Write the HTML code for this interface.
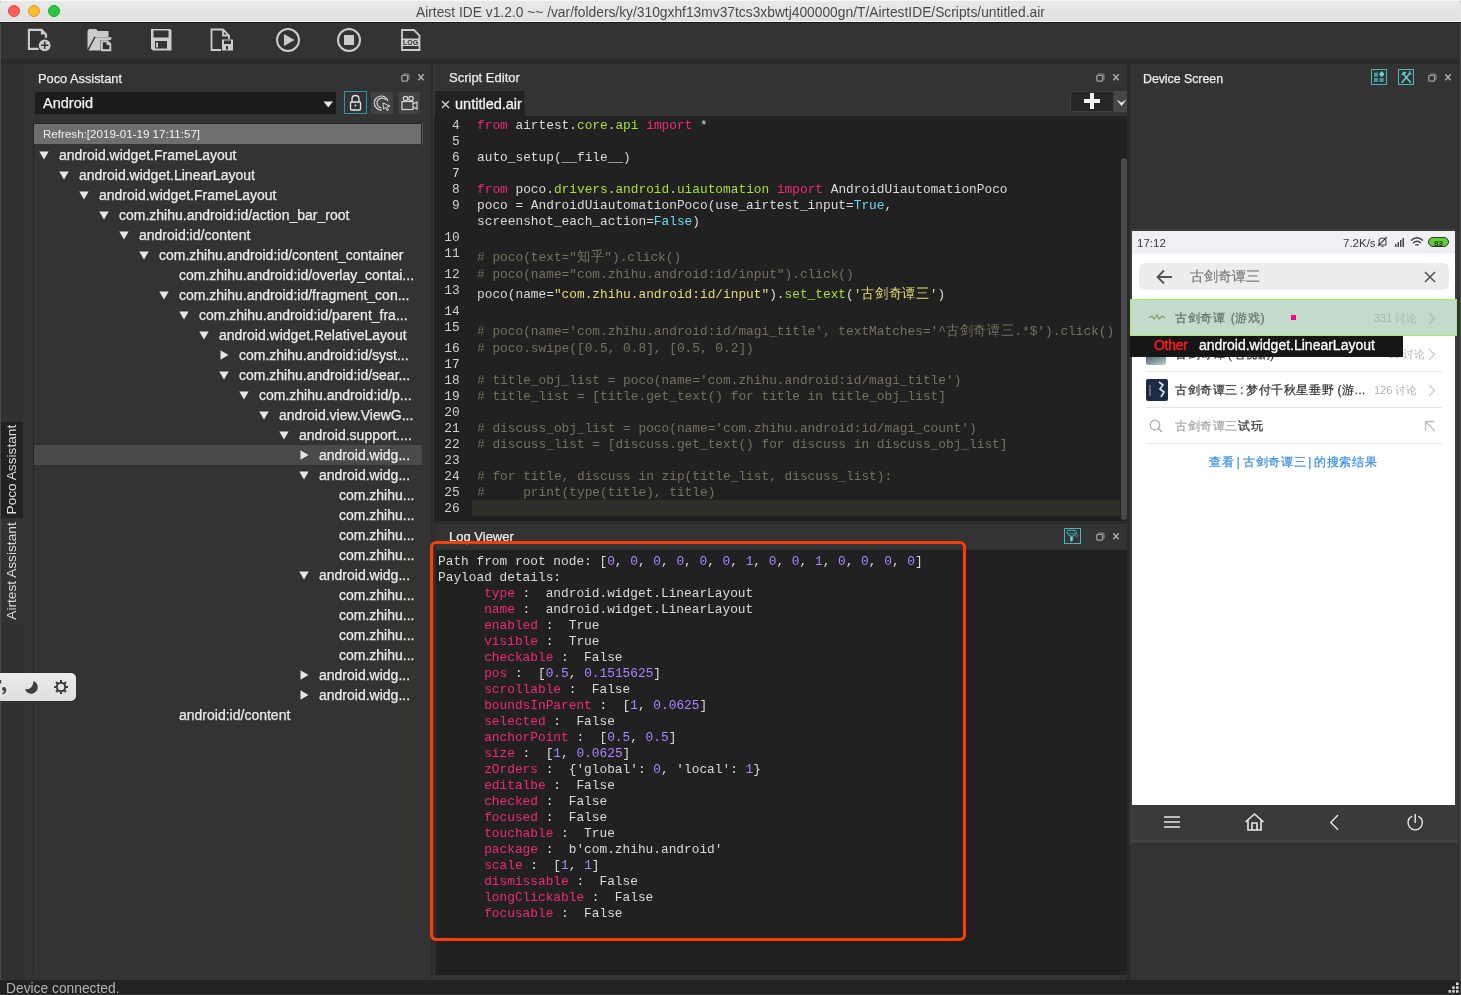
<!DOCTYPE html><html><head><meta charset="utf-8"><style>
html,body{margin:0;padding:0;}
body{width:1461px;height:995px;overflow:hidden;position:relative;background:#333333;font-family:"Liberation Sans", sans-serif;}
.mono{font-family:"Liberation Mono", monospace;}
.cjk{font-size:14px;letter-spacing:0.5px;}
</style></head><body><div style="position:absolute;left:0;top:0;width:1461px;height:995px;will-change:transform"><div style="position:absolute;left:0px;top:0px;width:6px;height:6px;background:#c8c8c8;"></div><div style="position:absolute;left:1455px;top:0px;width:6px;height:6px;background:#c8c8c8;"></div><div style="position:absolute;left:0px;top:0px;width:1461px;height:22px;background:linear-gradient(#e9e9e9,#e0e0e0);border-top-left-radius:5px;border-top-right-radius:5px;"></div><div style="position:absolute;left:0px;top:0px;width:1461px;height:1px;background:#f7f7f7;border-top-left-radius:5px;border-top-right-radius:5px;"></div><div style="position:absolute;left:0px;top:21px;width:1461px;height:1px;background:#f2f2f2;"></div><div style="position:absolute;left:0px;top:22px;width:1461px;height:1px;background:#1b1b1b;"></div><div style="position:absolute;left:8px;top:5px;width:12px;height:12px;background:#fc5f57;border-radius:50%;box-sizing:border-box;border:0.5px solid #de4a42;"></div><div style="position:absolute;left:28px;top:5px;width:12px;height:12px;background:#fdbc2e;border-radius:50%;box-sizing:border-box;border:0.5px solid #de9f1f;"></div><div style="position:absolute;left:48px;top:5px;width:12px;height:12px;background:#28c840;border-radius:50%;box-sizing:border-box;border:0.5px solid #1ea931;"></div><div style="position:absolute;left:416px;top:4.6px;white-space:pre;font-size:13.8px;line-height:16px;color:#4b4b4b;">Airtest IDE v1.2.0 ~~ /var/folders/ky/310gxhf13mv37tcs3xbwtj400000gn/T/AirtestIDE/Scripts/untitled.air</div><div style="position:absolute;left:0px;top:23px;width:1461px;height:36px;background:#333333;"></div><div style="position:absolute;left:0px;top:59px;width:1461px;height:5px;background:#2a2a2a;"></div><svg style="position:absolute;left:0;top:0" width="440" height="64">
<!-- new file -->
<path d="M38.6 48.9 H28.9 V29.9 H41.5" fill="none" stroke="#c9cbcd" stroke-width="2.1"/>
<path d="M40.9 28.8 H42 L47.1 34 V37.8 H44.8 V34.6 H40.9 Z" fill="#c9cbcd"/>
<circle cx="44.7" cy="45.3" r="5.9" fill="#c9cbcd"/>
<path d="M44.7 41.6 V49 M41 45.3 H48.4" stroke="#333" stroke-width="1.5"/>
<!-- open folder -->
<path d="M87.5 31 L89 29 H96 L98 31 H108.5 V37 H95 L87.5 50 Z" fill="#c9cbcd"/>
<path d="M95.5 37.3 H111.8 L107 50.5 H88.5 Z" fill="#c9cbcd"/>
<path d="M95 36.8 L87.8 50" stroke="#333" stroke-width="1.1"/>
<rect x="100.5" y="40" width="11" height="11.5" fill="#333"/>
<path d="M101.8 41.3 H107.5 L110.3 44 V50.3 H101.8 Z" fill="none" stroke="#c9cbcd" stroke-width="1.9"/>
<path d="M106.5 41.3 V45 H110.3 Z" fill="#c9cbcd"/>
<!-- save -->
<path d="M151 29 H170 L171.5 30.5 V50.5 H153 L151 48.5 Z" fill="#c9cbcd"/>
<rect x="153.5" y="30.5" width="15" height="7" fill="#333"/>
<rect x="155" y="41" width="12" height="7.5" fill="#333"/>
<rect x="156" y="42.5" width="2" height="5" fill="#c9cbcd"/>
<!-- save as -->
<g fill="none" stroke="#c9cbcd" stroke-width="1.8">
 <path d="M221 50 H211.5 V29.5 H223 L229 35.5 V39"/>
 <path d="M223 29.5 V35.5 H229"/>
</g>
<rect x="222" y="39.5" width="11" height="11" fill="#c9cbcd"/>
<rect x="224" y="40.5" width="7" height="3.5" fill="#333"/>
<rect x="226" y="46" width="2" height="3.5" fill="#333"/>
<!-- play -->
<circle cx="288" cy="40" r="11" fill="none" stroke="#c9cbcd" stroke-width="2"/>
<path d="M284 34 L294.5 40 L284 46 Z" fill="#c9cbcd"/>
<!-- stop -->
<circle cx="349" cy="40" r="11" fill="none" stroke="#c9cbcd" stroke-width="2"/>
<rect x="344" y="35" width="10" height="10" fill="#c9cbcd"/>
<!-- log -->
<path d="M402 30 H414 L419.5 35.5 V50 H402 Z" fill="none" stroke="#c9cbcd" stroke-width="1.8"/>
<rect x="401" y="38.5" width="19" height="7.5" fill="#c9cbcd"/>
<text x="410.5" y="45" font-family="Liberation Sans" font-weight="bold" font-size="7" fill="#333" text-anchor="middle">LOG</text>
</svg><div style="position:absolute;left:0px;top:64px;width:23px;height:916px;background:#313131;"></div><div style="position:absolute;left:0px;top:23px;width:1px;height:957px;background:#4a4a4a;"></div><div style="position:absolute;left:1460px;top:23px;width:1px;height:957px;background:#4a4a4a;"></div><div style="position:absolute;left:23px;top:64px;width:10px;height:916px;background:#333333;"></div><div style="position:absolute;left:1px;top:422px;width:21.5px;height:96px;background:#222222;"></div><div style="position:absolute;left:1px;top:518px;width:21.5px;height:105px;background:#333333;"></div><div style="position:absolute;left:-33px;top:461px;width:89px;height:18px;transform:rotate(-90deg);font-size:13.7px;line-height:18px;color:#dcdcdc;white-space:pre;text-align:center">Poco Assistant</div><div style="position:absolute;left:-38px;top:562px;width:99px;height:18px;transform:rotate(-90deg);font-size:13.7px;line-height:18px;color:#dcdcdc;white-space:pre;text-align:center">Airtest Assistant</div><div style="position:absolute;left:431px;top:64px;width:4px;height:916px;background:#2b2b2b;"></div><div style="position:absolute;left:433px;top:64px;width:1.5px;height:916px;background:#373737;"></div><div style="position:absolute;left:1127px;top:64px;width:3px;height:916px;background:#2a2a2a;"></div><div style="position:absolute;left:434px;top:521px;width:693px;height:2.5px;background:#2b2b2b;"></div><div style="position:absolute;left:0px;top:980px;width:1461px;height:15px;background:#222222;"></div><div style="position:absolute;left:6px;top:980.5px;white-space:pre;font-size:13.8px;line-height:16px;color:#b4b4b4;">Device connected.</div><div style="position:absolute;left:38px;top:71px;white-space:pre;font-size:12.8px;line-height:16px;color:#ececec;-webkit-text-stroke:0.25px #ececec;">Poco Assistant</div><svg style="position:absolute;left:401px;top:73px" width="26" height="10">
<rect x="0.8" y="2.3" width="5.8" height="5.8" rx="1.2" fill="none" stroke="#a0a0a0" stroke-width="1.3"/>
<path d="M2.2 1 H6.5 Q8 1 8 2.5 V6.8" fill="none" stroke="#8a8a8a" stroke-width="1.1"/>
<path d="M17.3 1.3 L22.7 7.3 M22.7 1.3 L17.3 7.3" stroke="#b0b0b0" stroke-width="1.4"/>
</svg><div style="position:absolute;left:35px;top:92px;width:301px;height:22px;background:#1c1c1c;"></div><div style="position:absolute;left:43px;top:94px;white-space:pre;font-size:14.5px;line-height:18px;color:#f0f0f0;-webkit-text-stroke:0.25px #f0f0f0;">Android</div><svg style="position:absolute;left:323px;top:101px" width="11" height="7"><path d="M0.5 0.5 H10 L5.25 6.5 Z" fill="#e8e8e8"/></svg><div style="position:absolute;left:344px;top:91px;width:23px;height:23px;box-sizing:border-box;border:1px solid #2b9aa6;"></div><svg style="position:absolute;left:344px;top:91px" width="23" height="23"><g fill="none" stroke="#e6e6e6" stroke-width="1.3"><path d="M8 11 V8 Q8 4.5 11.5 4.5 Q15 4.5 15 8 V11"/><rect x="6.5" y="11" width="10" height="8" rx="1"/></g><circle cx="11.5" cy="14.5" r="1" fill="#e6e6e6"/></svg><div style="position:absolute;left:371px;top:92px;width:22px;height:22px;background:#424242;"></div><svg style="position:absolute;left:371px;top:92px" width="22" height="22"><g fill="none" stroke="#d6d6d6" stroke-width="1.2"><path d="M17 9 A7 7 0 1 0 11 18"/><path d="M15 8 A5 5 0 1 0 10.5 16"/></g><path d="M12 11 L19 14 L16 15 L17.5 18 L16 18.5 L14.5 15.5 L12.5 17 Z" fill="none" stroke="#d6d6d6" stroke-width="1"/></svg><div style="position:absolute;left:398px;top:92px;width:22px;height:22px;background:#424242;"></div><svg style="position:absolute;left:398px;top:92px" width="22" height="22"><g fill="none" stroke="#d6d6d6" stroke-width="1.2"><circle cx="7.5" cy="6.5" r="2.2"/><circle cx="13" cy="6.5" r="2.2"/><rect x="4" y="9.5" width="11" height="8"/><path d="M15 12 L19 10 V17 L15 15"/></g></svg><div style="position:absolute;left:33px;top:123px;width:390px;height:852px;box-sizing:border-box;border-left:1px solid #262626;border-top:1px solid #262626;background:#333333;"></div><div style="position:absolute;left:34px;top:124px;width:388px;height:20px;background:#6e6e6e;"></div><div style="position:absolute;left:421px;top:124px;width:1px;height:20px;background:#2a2a2a;"></div><div style="position:absolute;left:422px;top:123px;width:1px;height:22px;background:#555555;"></div><div style="position:absolute;left:43px;top:126px;white-space:pre;font-size:11.6px;line-height:16px;color:#f2f2f2;">Refresh:[2019-01-19 17:11:57]</div><svg style="position:absolute;left:39px;top:151px" width="10" height="9"><path d="M0.3 0.5 H9.7 L5 8.5 Z" fill="#e6e6e6"/></svg><div style="position:absolute;left:59px;top:146px;white-space:pre;font-size:14px;line-height:18px;color:#ececec;-webkit-text-stroke:0.25px #ececec;">android.widget.FrameLayout</div><svg style="position:absolute;left:59px;top:171px" width="10" height="9"><path d="M0.3 0.5 H9.7 L5 8.5 Z" fill="#e6e6e6"/></svg><div style="position:absolute;left:79px;top:166px;white-space:pre;font-size:14px;line-height:18px;color:#ececec;-webkit-text-stroke:0.25px #ececec;">android.widget.LinearLayout</div><svg style="position:absolute;left:79px;top:191px" width="10" height="9"><path d="M0.3 0.5 H9.7 L5 8.5 Z" fill="#e6e6e6"/></svg><div style="position:absolute;left:99px;top:186px;white-space:pre;font-size:14px;line-height:18px;color:#ececec;-webkit-text-stroke:0.25px #ececec;">android.widget.FrameLayout</div><svg style="position:absolute;left:99px;top:211px" width="10" height="9"><path d="M0.3 0.5 H9.7 L5 8.5 Z" fill="#e6e6e6"/></svg><div style="position:absolute;left:119px;top:206px;white-space:pre;font-size:14px;line-height:18px;color:#ececec;-webkit-text-stroke:0.25px #ececec;">com.zhihu.android:id/action_bar_root</div><svg style="position:absolute;left:119px;top:231px" width="10" height="9"><path d="M0.3 0.5 H9.7 L5 8.5 Z" fill="#e6e6e6"/></svg><div style="position:absolute;left:139px;top:226px;white-space:pre;font-size:14px;line-height:18px;color:#ececec;-webkit-text-stroke:0.25px #ececec;">android:id/content</div><svg style="position:absolute;left:139px;top:251px" width="10" height="9"><path d="M0.3 0.5 H9.7 L5 8.5 Z" fill="#e6e6e6"/></svg><div style="position:absolute;left:159px;top:246px;white-space:pre;font-size:14px;line-height:18px;color:#ececec;-webkit-text-stroke:0.25px #ececec;">com.zhihu.android:id/content_container</div><div style="position:absolute;left:179px;top:266px;white-space:pre;font-size:14px;line-height:18px;color:#ececec;-webkit-text-stroke:0.25px #ececec;">com.zhihu.android:id/overlay_contai...</div><svg style="position:absolute;left:159px;top:291px" width="10" height="9"><path d="M0.3 0.5 H9.7 L5 8.5 Z" fill="#e6e6e6"/></svg><div style="position:absolute;left:179px;top:286px;white-space:pre;font-size:14px;line-height:18px;color:#ececec;-webkit-text-stroke:0.25px #ececec;">com.zhihu.android:id/fragment_con...</div><svg style="position:absolute;left:179px;top:311px" width="10" height="9"><path d="M0.3 0.5 H9.7 L5 8.5 Z" fill="#e6e6e6"/></svg><div style="position:absolute;left:199px;top:306px;white-space:pre;font-size:14px;line-height:18px;color:#ececec;-webkit-text-stroke:0.25px #ececec;">com.zhihu.android:id/parent_fra...</div><svg style="position:absolute;left:199px;top:331px" width="10" height="9"><path d="M0.3 0.5 H9.7 L5 8.5 Z" fill="#e6e6e6"/></svg><div style="position:absolute;left:219px;top:326px;white-space:pre;font-size:14px;line-height:18px;color:#ececec;-webkit-text-stroke:0.25px #ececec;">android.widget.RelativeLayout</div><svg style="position:absolute;left:220px;top:350px" width="9" height="10"><path d="M0.5 0.3 V9.7 L8.5 5 Z" fill="#e6e6e6"/></svg><div style="position:absolute;left:239px;top:346px;white-space:pre;font-size:14px;line-height:18px;color:#ececec;-webkit-text-stroke:0.25px #ececec;">com.zhihu.android:id/syst...</div><svg style="position:absolute;left:219px;top:371px" width="10" height="9"><path d="M0.3 0.5 H9.7 L5 8.5 Z" fill="#e6e6e6"/></svg><div style="position:absolute;left:239px;top:366px;white-space:pre;font-size:14px;line-height:18px;color:#ececec;-webkit-text-stroke:0.25px #ececec;">com.zhihu.android:id/sear...</div><svg style="position:absolute;left:239px;top:391px" width="10" height="9"><path d="M0.3 0.5 H9.7 L5 8.5 Z" fill="#e6e6e6"/></svg><div style="position:absolute;left:259px;top:386px;white-space:pre;font-size:14px;line-height:18px;color:#ececec;-webkit-text-stroke:0.25px #ececec;">com.zhihu.android:id/p...</div><svg style="position:absolute;left:259px;top:411px" width="10" height="9"><path d="M0.3 0.5 H9.7 L5 8.5 Z" fill="#e6e6e6"/></svg><div style="position:absolute;left:279px;top:406px;white-space:pre;font-size:14px;line-height:18px;color:#ececec;-webkit-text-stroke:0.25px #ececec;">android.view.ViewG...</div><svg style="position:absolute;left:279px;top:431px" width="10" height="9"><path d="M0.3 0.5 H9.7 L5 8.5 Z" fill="#e6e6e6"/></svg><div style="position:absolute;left:299px;top:426px;white-space:pre;font-size:14px;line-height:18px;color:#ececec;-webkit-text-stroke:0.25px #ececec;">android.support....</div><div style="position:absolute;left:34px;top:445px;width:388px;height:20px;background:#4a4a4a;"></div><svg style="position:absolute;left:300px;top:450px" width="9" height="10"><path d="M0.5 0.3 V9.7 L8.5 5 Z" fill="#e6e6e6"/></svg><div style="position:absolute;left:319px;top:446px;white-space:pre;font-size:14px;line-height:18px;color:#ececec;-webkit-text-stroke:0.25px #ececec;">android.widg...</div><svg style="position:absolute;left:299px;top:471px" width="10" height="9"><path d="M0.3 0.5 H9.7 L5 8.5 Z" fill="#e6e6e6"/></svg><div style="position:absolute;left:319px;top:466px;white-space:pre;font-size:14px;line-height:18px;color:#ececec;-webkit-text-stroke:0.25px #ececec;">android.widg...</div><div style="position:absolute;left:339px;top:486px;white-space:pre;font-size:14px;line-height:18px;color:#ececec;-webkit-text-stroke:0.25px #ececec;">com.zhihu...</div><div style="position:absolute;left:339px;top:506px;white-space:pre;font-size:14px;line-height:18px;color:#ececec;-webkit-text-stroke:0.25px #ececec;">com.zhihu...</div><div style="position:absolute;left:339px;top:526px;white-space:pre;font-size:14px;line-height:18px;color:#ececec;-webkit-text-stroke:0.25px #ececec;">com.zhihu...</div><div style="position:absolute;left:339px;top:546px;white-space:pre;font-size:14px;line-height:18px;color:#ececec;-webkit-text-stroke:0.25px #ececec;">com.zhihu...</div><svg style="position:absolute;left:299px;top:571px" width="10" height="9"><path d="M0.3 0.5 H9.7 L5 8.5 Z" fill="#e6e6e6"/></svg><div style="position:absolute;left:319px;top:566px;white-space:pre;font-size:14px;line-height:18px;color:#ececec;-webkit-text-stroke:0.25px #ececec;">android.widg...</div><div style="position:absolute;left:339px;top:586px;white-space:pre;font-size:14px;line-height:18px;color:#ececec;-webkit-text-stroke:0.25px #ececec;">com.zhihu...</div><div style="position:absolute;left:339px;top:606px;white-space:pre;font-size:14px;line-height:18px;color:#ececec;-webkit-text-stroke:0.25px #ececec;">com.zhihu...</div><div style="position:absolute;left:339px;top:626px;white-space:pre;font-size:14px;line-height:18px;color:#ececec;-webkit-text-stroke:0.25px #ececec;">com.zhihu...</div><div style="position:absolute;left:339px;top:646px;white-space:pre;font-size:14px;line-height:18px;color:#ececec;-webkit-text-stroke:0.25px #ececec;">com.zhihu...</div><svg style="position:absolute;left:300px;top:670px" width="9" height="10"><path d="M0.5 0.3 V9.7 L8.5 5 Z" fill="#e6e6e6"/></svg><div style="position:absolute;left:319px;top:666px;white-space:pre;font-size:14px;line-height:18px;color:#ececec;-webkit-text-stroke:0.25px #ececec;">android.widg...</div><svg style="position:absolute;left:300px;top:690px" width="9" height="10"><path d="M0.5 0.3 V9.7 L8.5 5 Z" fill="#e6e6e6"/></svg><div style="position:absolute;left:319px;top:686px;white-space:pre;font-size:14px;line-height:18px;color:#ececec;-webkit-text-stroke:0.25px #ececec;">android.widg...</div><div style="position:absolute;left:179px;top:706px;white-space:pre;font-size:14px;line-height:18px;color:#ececec;-webkit-text-stroke:0.25px #ececec;">android:id/content</div><div style="position:absolute;left:449px;top:70px;white-space:pre;font-size:13px;line-height:16px;color:#ececec;-webkit-text-stroke:0.25px #ececec;">Script Editor</div><svg style="position:absolute;left:1096px;top:73px" width="26" height="10">
<rect x="0.8" y="2.3" width="5.8" height="5.8" rx="1.2" fill="none" stroke="#a0a0a0" stroke-width="1.3"/>
<path d="M2.2 1 H6.5 Q8 1 8 2.5 V6.8" fill="none" stroke="#8a8a8a" stroke-width="1.1"/>
<path d="M17.3 1.3 L22.7 7.3 M22.7 1.3 L17.3 7.3" stroke="#b0b0b0" stroke-width="1.4"/>
</svg><div style="position:absolute;left:435px;top:91px;width:90px;height:25px;background:#222222;"></div><div style="position:absolute;left:524px;top:91px;width:1px;height:25px;background:#2a2a2a;"></div><svg style="position:absolute;left:441px;top:100px" width="9" height="9"><path d="M1 1 L8 8 M8 1 L1 8" stroke="#d8d8d8" stroke-width="1.3"/></svg><div style="position:absolute;left:455px;top:95px;white-space:pre;font-size:14.5px;line-height:18px;color:#f2f2f2;-webkit-text-stroke:0.3px #f2f2f2;">untitled.air</div><div style="position:absolute;left:1070px;top:91px;width:44px;height:21px;box-sizing:border-box;border:1px solid #3e3e3e;background:#262626;"></div><svg style="position:absolute;left:1083px;top:93px" width="18" height="16"><path d="M9 0 V16 M1 8 H17" stroke="#eef2f4" stroke-width="4"/></svg><div style="position:absolute;left:1114px;top:91px;width:13px;height:21px;background:#474747;"></div><svg style="position:absolute;left:1116px;top:99px" width="11" height="8"><path d="M0.5 0.5 L5.5 7 L10.5 0.5 L5.5 3.5 Z" fill="#e8e8e8"/></svg><div style="position:absolute;left:434px;top:116px;width:693px;height:405px;background:#212121;"></div><div style="position:absolute;left:1121px;top:158px;width:6px;height:362px;background:#4a4a4a;border-radius:3px;"></div><div style="position:absolute;left:472px;top:500px;width:648px;height:16px;background:#2f2f2a;"></div><div style="position:absolute;left:437px;top:118px;width:24px;text-align:right;font-family:'Liberation Mono',monospace;font-size:13.6px;line-height:16px;transform-origin:0 0;transform:scaleX(0.9424);color:#d0d0d0;white-space:pre">4</div><div style="position:absolute;left:477px;top:118px;font-family:'Liberation Mono',monospace;font-size:13.6px;line-height:16px;transform-origin:0 0;transform:scaleX(0.9424);white-space:pre"><span style="color:#f0287a">from</span><span style="color:#dadada"> airtest.</span><span style="color:#a6e22e">core</span><span style="color:#dadada">.</span><span style="color:#a6e22e">api</span><span style="color:#dadada"> </span><span style="color:#f0287a">import</span><span style="color:#dadada"> *</span></div><div style="position:absolute;left:437px;top:134px;width:24px;text-align:right;font-family:'Liberation Mono',monospace;font-size:13.6px;line-height:16px;transform-origin:0 0;transform:scaleX(0.9424);color:#d0d0d0;white-space:pre">5</div><div style="position:absolute;left:477px;top:134px;font-family:'Liberation Mono',monospace;font-size:13.6px;line-height:16px;transform-origin:0 0;transform:scaleX(0.9424);white-space:pre"></div><div style="position:absolute;left:437px;top:150px;width:24px;text-align:right;font-family:'Liberation Mono',monospace;font-size:13.6px;line-height:16px;transform-origin:0 0;transform:scaleX(0.9424);color:#d0d0d0;white-space:pre">6</div><div style="position:absolute;left:477px;top:150px;font-family:'Liberation Mono',monospace;font-size:13.6px;line-height:16px;transform-origin:0 0;transform:scaleX(0.9424);white-space:pre"><span style="color:#dadada">auto_setup(__file__)</span></div><div style="position:absolute;left:437px;top:166px;width:24px;text-align:right;font-family:'Liberation Mono',monospace;font-size:13.6px;line-height:16px;transform-origin:0 0;transform:scaleX(0.9424);color:#d0d0d0;white-space:pre">7</div><div style="position:absolute;left:477px;top:166px;font-family:'Liberation Mono',monospace;font-size:13.6px;line-height:16px;transform-origin:0 0;transform:scaleX(0.9424);white-space:pre"></div><div style="position:absolute;left:437px;top:182px;width:24px;text-align:right;font-family:'Liberation Mono',monospace;font-size:13.6px;line-height:16px;transform-origin:0 0;transform:scaleX(0.9424);color:#d0d0d0;white-space:pre">8</div><div style="position:absolute;left:477px;top:182px;font-family:'Liberation Mono',monospace;font-size:13.6px;line-height:16px;transform-origin:0 0;transform:scaleX(0.9424);white-space:pre"><span style="color:#f0287a">from</span><span style="color:#dadada"> poco.</span><span style="color:#a6e22e">drivers</span><span style="color:#dadada">.</span><span style="color:#a6e22e">android</span><span style="color:#dadada">.</span><span style="color:#a6e22e">uiautomation</span><span style="color:#dadada"> </span><span style="color:#f0287a">import</span><span style="color:#dadada"> AndroidUiautomationPoco</span></div><div style="position:absolute;left:437px;top:198px;width:24px;text-align:right;font-family:'Liberation Mono',monospace;font-size:13.6px;line-height:16px;transform-origin:0 0;transform:scaleX(0.9424);color:#d0d0d0;white-space:pre">9</div><div style="position:absolute;left:477px;top:198px;font-family:'Liberation Mono',monospace;font-size:13.6px;line-height:16px;transform-origin:0 0;transform:scaleX(0.9424);white-space:pre"><span style="color:#dadada">poco = AndroidUiautomationPoco(use_airtest_input=</span><span style="color:#66d9ef">True</span><span style="color:#dadada">,</span></div><div style="position:absolute;left:477px;top:214px;font-family:'Liberation Mono',monospace;font-size:13.6px;line-height:16px;transform-origin:0 0;transform:scaleX(0.9424);white-space:pre"><span style="color:#dadada">screenshot_each_action=</span><span style="color:#66d9ef">False</span><span style="color:#dadada">)</span></div><div style="position:absolute;left:437px;top:230px;width:24px;text-align:right;font-family:'Liberation Mono',monospace;font-size:13.6px;line-height:16px;transform-origin:0 0;transform:scaleX(0.9424);color:#d0d0d0;white-space:pre">10</div><div style="position:absolute;left:477px;top:230px;font-family:'Liberation Mono',monospace;font-size:13.6px;line-height:16px;transform-origin:0 0;transform:scaleX(0.9424);white-space:pre"></div><div style="position:absolute;left:437px;top:246px;width:24px;text-align:right;font-family:'Liberation Mono',monospace;font-size:13.6px;line-height:16px;transform-origin:0 0;transform:scaleX(0.9424);color:#d0d0d0;white-space:pre">11</div><div style="position:absolute;left:477px;top:249px;font-family:'Liberation Mono',monospace;font-size:13.6px;line-height:16px;transform-origin:0 0;transform:scaleX(0.9424);white-space:pre"><span style="color:#75715e"># poco(text=&quot;<span class="cjk">知</span><span class="cjk">乎</span>&quot;).click()</span></div><div style="position:absolute;left:437px;top:267px;width:24px;text-align:right;font-family:'Liberation Mono',monospace;font-size:13.6px;line-height:16px;transform-origin:0 0;transform:scaleX(0.9424);color:#d0d0d0;white-space:pre">12</div><div style="position:absolute;left:477px;top:267px;font-family:'Liberation Mono',monospace;font-size:13.6px;line-height:16px;transform-origin:0 0;transform:scaleX(0.9424);white-space:pre"><span style="color:#75715e"># poco(name=&quot;com.zhihu.android:id/input&quot;).click()</span></div><div style="position:absolute;left:437px;top:283px;width:24px;text-align:right;font-family:'Liberation Mono',monospace;font-size:13.6px;line-height:16px;transform-origin:0 0;transform:scaleX(0.9424);color:#d0d0d0;white-space:pre">13</div><div style="position:absolute;left:477px;top:286px;font-family:'Liberation Mono',monospace;font-size:13.6px;line-height:16px;transform-origin:0 0;transform:scaleX(0.9424);white-space:pre"><span style="color:#dadada">poco(name=</span><span style="color:#e6db74">&quot;com.zhihu.android:id/input&quot;</span><span style="color:#dadada">).</span><span style="color:#a6e22e">set_text</span><span style="color:#dadada">(</span><span style="color:#e6db74">&#x27;<span class="cjk">古</span><span class="cjk">剑</span><span class="cjk">奇</span><span class="cjk">谭</span><span class="cjk">三</span>&#x27;</span><span style="color:#dadada">)</span></div><div style="position:absolute;left:437px;top:304px;width:24px;text-align:right;font-family:'Liberation Mono',monospace;font-size:13.6px;line-height:16px;transform-origin:0 0;transform:scaleX(0.9424);color:#d0d0d0;white-space:pre">14</div><div style="position:absolute;left:477px;top:304px;font-family:'Liberation Mono',monospace;font-size:13.6px;line-height:16px;transform-origin:0 0;transform:scaleX(0.9424);white-space:pre"></div><div style="position:absolute;left:437px;top:320px;width:24px;text-align:right;font-family:'Liberation Mono',monospace;font-size:13.6px;line-height:16px;transform-origin:0 0;transform:scaleX(0.9424);color:#d0d0d0;white-space:pre">15</div><div style="position:absolute;left:477px;top:323px;font-family:'Liberation Mono',monospace;font-size:13.6px;line-height:16px;transform-origin:0 0;transform:scaleX(0.9424);white-space:pre"><span style="color:#75715e"># poco(name=&#x27;com.zhihu.android:id/magi_title&#x27;, textMatches=&#x27;^<span class="cjk">古</span><span class="cjk">剑</span><span class="cjk">奇</span><span class="cjk">谭</span><span class="cjk">三</span>.*$&#x27;).click()</span></div><div style="position:absolute;left:437px;top:341px;width:24px;text-align:right;font-family:'Liberation Mono',monospace;font-size:13.6px;line-height:16px;transform-origin:0 0;transform:scaleX(0.9424);color:#d0d0d0;white-space:pre">16</div><div style="position:absolute;left:477px;top:341px;font-family:'Liberation Mono',monospace;font-size:13.6px;line-height:16px;transform-origin:0 0;transform:scaleX(0.9424);white-space:pre"><span style="color:#75715e"># poco.swipe([0.5, 0.8], [0.5, 0.2])</span></div><div style="position:absolute;left:437px;top:357px;width:24px;text-align:right;font-family:'Liberation Mono',monospace;font-size:13.6px;line-height:16px;transform-origin:0 0;transform:scaleX(0.9424);color:#d0d0d0;white-space:pre">17</div><div style="position:absolute;left:477px;top:357px;font-family:'Liberation Mono',monospace;font-size:13.6px;line-height:16px;transform-origin:0 0;transform:scaleX(0.9424);white-space:pre"></div><div style="position:absolute;left:437px;top:373px;width:24px;text-align:right;font-family:'Liberation Mono',monospace;font-size:13.6px;line-height:16px;transform-origin:0 0;transform:scaleX(0.9424);color:#d0d0d0;white-space:pre">18</div><div style="position:absolute;left:477px;top:373px;font-family:'Liberation Mono',monospace;font-size:13.6px;line-height:16px;transform-origin:0 0;transform:scaleX(0.9424);white-space:pre"><span style="color:#75715e"># title_obj_list = poco(name=&#x27;com.zhihu.android:id/magi_title&#x27;)</span></div><div style="position:absolute;left:437px;top:389px;width:24px;text-align:right;font-family:'Liberation Mono',monospace;font-size:13.6px;line-height:16px;transform-origin:0 0;transform:scaleX(0.9424);color:#d0d0d0;white-space:pre">19</div><div style="position:absolute;left:477px;top:389px;font-family:'Liberation Mono',monospace;font-size:13.6px;line-height:16px;transform-origin:0 0;transform:scaleX(0.9424);white-space:pre"><span style="color:#75715e"># title_list = [title.get_text() for title in title_obj_list]</span></div><div style="position:absolute;left:437px;top:405px;width:24px;text-align:right;font-family:'Liberation Mono',monospace;font-size:13.6px;line-height:16px;transform-origin:0 0;transform:scaleX(0.9424);color:#d0d0d0;white-space:pre">20</div><div style="position:absolute;left:477px;top:405px;font-family:'Liberation Mono',monospace;font-size:13.6px;line-height:16px;transform-origin:0 0;transform:scaleX(0.9424);white-space:pre"></div><div style="position:absolute;left:437px;top:421px;width:24px;text-align:right;font-family:'Liberation Mono',monospace;font-size:13.6px;line-height:16px;transform-origin:0 0;transform:scaleX(0.9424);color:#d0d0d0;white-space:pre">21</div><div style="position:absolute;left:477px;top:421px;font-family:'Liberation Mono',monospace;font-size:13.6px;line-height:16px;transform-origin:0 0;transform:scaleX(0.9424);white-space:pre"><span style="color:#75715e"># discuss_obj_list = poco(name=&#x27;com.zhihu.android:id/magi_count&#x27;)</span></div><div style="position:absolute;left:437px;top:437px;width:24px;text-align:right;font-family:'Liberation Mono',monospace;font-size:13.6px;line-height:16px;transform-origin:0 0;transform:scaleX(0.9424);color:#d0d0d0;white-space:pre">22</div><div style="position:absolute;left:477px;top:437px;font-family:'Liberation Mono',monospace;font-size:13.6px;line-height:16px;transform-origin:0 0;transform:scaleX(0.9424);white-space:pre"><span style="color:#75715e"># discuss_list = [discuss.get_text() for discuss in discuss_obj_list]</span></div><div style="position:absolute;left:437px;top:453px;width:24px;text-align:right;font-family:'Liberation Mono',monospace;font-size:13.6px;line-height:16px;transform-origin:0 0;transform:scaleX(0.9424);color:#d0d0d0;white-space:pre">23</div><div style="position:absolute;left:477px;top:453px;font-family:'Liberation Mono',monospace;font-size:13.6px;line-height:16px;transform-origin:0 0;transform:scaleX(0.9424);white-space:pre"></div><div style="position:absolute;left:437px;top:469px;width:24px;text-align:right;font-family:'Liberation Mono',monospace;font-size:13.6px;line-height:16px;transform-origin:0 0;transform:scaleX(0.9424);color:#d0d0d0;white-space:pre">24</div><div style="position:absolute;left:477px;top:469px;font-family:'Liberation Mono',monospace;font-size:13.6px;line-height:16px;transform-origin:0 0;transform:scaleX(0.9424);white-space:pre"><span style="color:#75715e"># for title, discuss in zip(title_list, discuss_list):</span></div><div style="position:absolute;left:437px;top:485px;width:24px;text-align:right;font-family:'Liberation Mono',monospace;font-size:13.6px;line-height:16px;transform-origin:0 0;transform:scaleX(0.9424);color:#d0d0d0;white-space:pre">25</div><div style="position:absolute;left:477px;top:485px;font-family:'Liberation Mono',monospace;font-size:13.6px;line-height:16px;transform-origin:0 0;transform:scaleX(0.9424);white-space:pre"><span style="color:#75715e">#     print(type(title), title)</span></div><div style="position:absolute;left:437px;top:501px;width:24px;text-align:right;font-family:'Liberation Mono',monospace;font-size:13.6px;line-height:16px;transform-origin:0 0;transform:scaleX(0.9424);color:#d0d0d0;white-space:pre">26</div><div style="position:absolute;left:477px;top:501px;font-family:'Liberation Mono',monospace;font-size:13.6px;line-height:16px;transform-origin:0 0;transform:scaleX(0.9424);white-space:pre"></div><div style="position:absolute;left:449px;top:529px;white-space:pre;font-size:13px;line-height:16px;color:#ececec;-webkit-text-stroke:0.25px #ececec;">Log Viewer</div><div style="position:absolute;left:1064px;top:528px;width:17px;height:16px;box-sizing:border-box;border:1px solid #4bb5ba;"></div><svg style="position:absolute;left:1064px;top:528px" width="17" height="16"><ellipse cx="7.7" cy="3.8" rx="5" ry="1.6" fill="none" stroke="#4bb5ba" stroke-width="1"/><path d="M2.8 4.2 Q3.5 7 6.6 8.6 V13.5 L8.6 12.5 V8.6 Q11.8 7 12.6 4.2" fill="#2a5f63" stroke="#4bb5ba" stroke-width="0.9"/><path d="M6.8 8.5 V13 L8.4 12.2 V8.5 Z" fill="#7fe0e0"/><circle cx="12.5" cy="7.5" r="1.4" fill="none" stroke="#3d8f93" stroke-width="0.9"/></svg><svg style="position:absolute;left:1096px;top:532px" width="26" height="10">
<rect x="0.8" y="2.3" width="5.8" height="5.8" rx="1.2" fill="none" stroke="#a0a0a0" stroke-width="1.3"/>
<path d="M2.2 1 H6.5 Q8 1 8 2.5 V6.8" fill="none" stroke="#8a8a8a" stroke-width="1.1"/>
<path d="M17.3 1.3 L22.7 7.3 M22.7 1.3 L17.3 7.3" stroke="#b0b0b0" stroke-width="1.4"/>
</svg><div style="position:absolute;left:434px;top:550px;width:693px;height:425px;background:#212121;"></div><div style="position:absolute;left:434px;top:523px;width:1.5px;height:452px;background:#2d2d2d;"></div><div style="position:absolute;left:435px;top:975px;width:692px;height:5px;background:#333333;"></div><div style="position:absolute;left:438px;top:554px;font-family:'Liberation Mono',monospace;font-size:13.6px;line-height:16px;transform-origin:0 0;transform:scaleX(0.9424);white-space:pre"><span style="color:#dadada">Path from root node: [</span><span style="color:#ae81ff">0</span><span style="color:#dadada">, </span><span style="color:#ae81ff">0</span><span style="color:#dadada">, </span><span style="color:#ae81ff">0</span><span style="color:#dadada">, </span><span style="color:#ae81ff">0</span><span style="color:#dadada">, </span><span style="color:#ae81ff">0</span><span style="color:#dadada">, </span><span style="color:#ae81ff">0</span><span style="color:#dadada">, </span><span style="color:#ae81ff">1</span><span style="color:#dadada">, </span><span style="color:#ae81ff">0</span><span style="color:#dadada">, </span><span style="color:#ae81ff">0</span><span style="color:#dadada">, </span><span style="color:#ae81ff">1</span><span style="color:#dadada">, </span><span style="color:#ae81ff">0</span><span style="color:#dadada">, </span><span style="color:#ae81ff">0</span><span style="color:#dadada">, </span><span style="color:#ae81ff">0</span><span style="color:#dadada">, </span><span style="color:#ae81ff">0</span><span style="color:#dadada">]</span></div><div style="position:absolute;left:438px;top:570px;font-family:'Liberation Mono',monospace;font-size:13.6px;line-height:16px;transform-origin:0 0;transform:scaleX(0.9424);white-space:pre"><span style="color:#dadada">Payload details:</span></div><div style="position:absolute;left:438px;top:586px;font-family:'Liberation Mono',monospace;font-size:13.6px;line-height:16px;transform-origin:0 0;transform:scaleX(0.9424);white-space:pre"><span style="color:#dadada">      </span><span style="color:#f0287a">type</span><span style="color:#dadada"> :  </span><span style="color:#dadada">android.widget.LinearLayout</span></div><div style="position:absolute;left:438px;top:602px;font-family:'Liberation Mono',monospace;font-size:13.6px;line-height:16px;transform-origin:0 0;transform:scaleX(0.9424);white-space:pre"><span style="color:#dadada">      </span><span style="color:#f0287a">name</span><span style="color:#dadada"> :  </span><span style="color:#dadada">android.widget.LinearLayout</span></div><div style="position:absolute;left:438px;top:618px;font-family:'Liberation Mono',monospace;font-size:13.6px;line-height:16px;transform-origin:0 0;transform:scaleX(0.9424);white-space:pre"><span style="color:#dadada">      </span><span style="color:#f0287a">enabled</span><span style="color:#dadada"> :  </span><span style="color:#dadada">True</span></div><div style="position:absolute;left:438px;top:634px;font-family:'Liberation Mono',monospace;font-size:13.6px;line-height:16px;transform-origin:0 0;transform:scaleX(0.9424);white-space:pre"><span style="color:#dadada">      </span><span style="color:#f0287a">visible</span><span style="color:#dadada"> :  </span><span style="color:#dadada">True</span></div><div style="position:absolute;left:438px;top:650px;font-family:'Liberation Mono',monospace;font-size:13.6px;line-height:16px;transform-origin:0 0;transform:scaleX(0.9424);white-space:pre"><span style="color:#dadada">      </span><span style="color:#f0287a">checkable</span><span style="color:#dadada"> :  </span><span style="color:#dadada">False</span></div><div style="position:absolute;left:438px;top:666px;font-family:'Liberation Mono',monospace;font-size:13.6px;line-height:16px;transform-origin:0 0;transform:scaleX(0.9424);white-space:pre"><span style="color:#dadada">      </span><span style="color:#f0287a">pos</span><span style="color:#dadada"> :  </span><span style="color:#dadada">[</span><span style="color:#ae81ff">0.5</span><span style="color:#dadada">, </span><span style="color:#ae81ff">0.1515625</span><span style="color:#dadada">]</span></div><div style="position:absolute;left:438px;top:682px;font-family:'Liberation Mono',monospace;font-size:13.6px;line-height:16px;transform-origin:0 0;transform:scaleX(0.9424);white-space:pre"><span style="color:#dadada">      </span><span style="color:#f0287a">scrollable</span><span style="color:#dadada"> :  </span><span style="color:#dadada">False</span></div><div style="position:absolute;left:438px;top:698px;font-family:'Liberation Mono',monospace;font-size:13.6px;line-height:16px;transform-origin:0 0;transform:scaleX(0.9424);white-space:pre"><span style="color:#dadada">      </span><span style="color:#f0287a">boundsInParent</span><span style="color:#dadada"> :  </span><span style="color:#dadada">[</span><span style="color:#ae81ff">1</span><span style="color:#dadada">, </span><span style="color:#ae81ff">0.0625</span><span style="color:#dadada">]</span></div><div style="position:absolute;left:438px;top:714px;font-family:'Liberation Mono',monospace;font-size:13.6px;line-height:16px;transform-origin:0 0;transform:scaleX(0.9424);white-space:pre"><span style="color:#dadada">      </span><span style="color:#f0287a">selected</span><span style="color:#dadada"> :  </span><span style="color:#dadada">False</span></div><div style="position:absolute;left:438px;top:730px;font-family:'Liberation Mono',monospace;font-size:13.6px;line-height:16px;transform-origin:0 0;transform:scaleX(0.9424);white-space:pre"><span style="color:#dadada">      </span><span style="color:#f0287a">anchorPoint</span><span style="color:#dadada"> :  </span><span style="color:#dadada">[</span><span style="color:#ae81ff">0.5</span><span style="color:#dadada">, </span><span style="color:#ae81ff">0.5</span><span style="color:#dadada">]</span></div><div style="position:absolute;left:438px;top:746px;font-family:'Liberation Mono',monospace;font-size:13.6px;line-height:16px;transform-origin:0 0;transform:scaleX(0.9424);white-space:pre"><span style="color:#dadada">      </span><span style="color:#f0287a">size</span><span style="color:#dadada"> :  </span><span style="color:#dadada">[</span><span style="color:#ae81ff">1</span><span style="color:#dadada">, </span><span style="color:#ae81ff">0.0625</span><span style="color:#dadada">]</span></div><div style="position:absolute;left:438px;top:762px;font-family:'Liberation Mono',monospace;font-size:13.6px;line-height:16px;transform-origin:0 0;transform:scaleX(0.9424);white-space:pre"><span style="color:#dadada">      </span><span style="color:#f0287a">zOrders</span><span style="color:#dadada"> :  </span><span style="color:#dadada">{&#x27;global&#x27;: </span><span style="color:#ae81ff">0</span><span style="color:#dadada">, &#x27;local&#x27;: </span><span style="color:#ae81ff">1</span><span style="color:#dadada">}</span></div><div style="position:absolute;left:438px;top:778px;font-family:'Liberation Mono',monospace;font-size:13.6px;line-height:16px;transform-origin:0 0;transform:scaleX(0.9424);white-space:pre"><span style="color:#dadada">      </span><span style="color:#f0287a">editalbe</span><span style="color:#dadada"> :  </span><span style="color:#dadada">False</span></div><div style="position:absolute;left:438px;top:794px;font-family:'Liberation Mono',monospace;font-size:13.6px;line-height:16px;transform-origin:0 0;transform:scaleX(0.9424);white-space:pre"><span style="color:#dadada">      </span><span style="color:#f0287a">checked</span><span style="color:#dadada"> :  </span><span style="color:#dadada">False</span></div><div style="position:absolute;left:438px;top:810px;font-family:'Liberation Mono',monospace;font-size:13.6px;line-height:16px;transform-origin:0 0;transform:scaleX(0.9424);white-space:pre"><span style="color:#dadada">      </span><span style="color:#f0287a">focused</span><span style="color:#dadada"> :  </span><span style="color:#dadada">False</span></div><div style="position:absolute;left:438px;top:826px;font-family:'Liberation Mono',monospace;font-size:13.6px;line-height:16px;transform-origin:0 0;transform:scaleX(0.9424);white-space:pre"><span style="color:#dadada">      </span><span style="color:#f0287a">touchable</span><span style="color:#dadada"> :  </span><span style="color:#dadada">True</span></div><div style="position:absolute;left:438px;top:842px;font-family:'Liberation Mono',monospace;font-size:13.6px;line-height:16px;transform-origin:0 0;transform:scaleX(0.9424);white-space:pre"><span style="color:#dadada">      </span><span style="color:#f0287a">package</span><span style="color:#dadada"> :  </span><span style="color:#dadada">b&#x27;com.zhihu.android&#x27;</span></div><div style="position:absolute;left:438px;top:858px;font-family:'Liberation Mono',monospace;font-size:13.6px;line-height:16px;transform-origin:0 0;transform:scaleX(0.9424);white-space:pre"><span style="color:#dadada">      </span><span style="color:#f0287a">scale</span><span style="color:#dadada"> :  </span><span style="color:#dadada">[</span><span style="color:#ae81ff">1</span><span style="color:#dadada">, </span><span style="color:#ae81ff">1</span><span style="color:#dadada">]</span></div><div style="position:absolute;left:438px;top:874px;font-family:'Liberation Mono',monospace;font-size:13.6px;line-height:16px;transform-origin:0 0;transform:scaleX(0.9424);white-space:pre"><span style="color:#dadada">      </span><span style="color:#f0287a">dismissable</span><span style="color:#dadada"> :  </span><span style="color:#dadada">False</span></div><div style="position:absolute;left:438px;top:890px;font-family:'Liberation Mono',monospace;font-size:13.6px;line-height:16px;transform-origin:0 0;transform:scaleX(0.9424);white-space:pre"><span style="color:#dadada">      </span><span style="color:#f0287a">longClickable</span><span style="color:#dadada"> :  </span><span style="color:#dadada">False</span></div><div style="position:absolute;left:438px;top:906px;font-family:'Liberation Mono',monospace;font-size:13.6px;line-height:16px;transform-origin:0 0;transform:scaleX(0.9424);white-space:pre"><span style="color:#dadada">      </span><span style="color:#f0287a">focusable</span><span style="color:#dadada"> :  </span><span style="color:#dadada">False</span></div><div style="position:absolute;left:430px;top:541px;width:536px;height:400px;box-sizing:border-box;border:3.5px solid #ff3d00;border-radius:6px;"></div><div style="position:absolute;left:1143px;top:71px;white-space:pre;font-size:12.3px;line-height:16px;color:#ececec;-webkit-text-stroke:0.25px #ececec;">Device Screen</div><div style="position:absolute;left:1371px;top:69px;width:16px;height:16px;box-sizing:border-box;border:1px solid #4bb5ba;"></div><svg style="position:absolute;left:1371px;top:69px" width="16" height="16"><rect x="3" y="3.5" width="4" height="4.3" fill="#3a9a9d"/><rect x="3" y="9" width="4" height="4" fill="#3a9a9d"/><rect x="8.5" y="9" width="4.2" height="4" fill="#3a9a9d"/><path d="M10.7 2 L13.5 5.2 L10.7 8.3 L8 5.2 Z" fill="#6ad8d8"/></svg><div style="position:absolute;left:1398px;top:69px;width:16px;height:16px;box-sizing:border-box;border:1px solid #4bb5ba;"></div><svg style="position:absolute;left:1398px;top:69px" width="16" height="16"><g stroke="#62cccc" stroke-width="1.6" fill="none" stroke-linecap="round"><path d="M4 13.5 L11.8 4.2"/><path d="M5 4.5 L12.5 13.3"/></g><path d="M2.5 6.5 L5.8 2.6 L8.5 3.2 L7 5 Z" fill="#62cccc"/><path d="M11 3.5 Q11.2 1.8 12.6 1.6 L12 3.5 L13 4.5 L14.4 4 Q14 5.6 12.5 5.5 Z" fill="#62cccc"/></svg><svg style="position:absolute;left:1428px;top:73px" width="26" height="10">
<rect x="0.8" y="2.3" width="5.8" height="5.8" rx="1.2" fill="none" stroke="#a0a0a0" stroke-width="1.3"/>
<path d="M2.2 1 H6.5 Q8 1 8 2.5 V6.8" fill="none" stroke="#8a8a8a" stroke-width="1.1"/>
<path d="M17.3 1.3 L22.7 7.3 M22.7 1.3 L17.3 7.3" stroke="#b0b0b0" stroke-width="1.4"/>
</svg><div style="position:absolute;left:1130px;top:229px;width:327px;height:614px;background:#3d3d3d;"></div><div style="position:absolute;left:1132px;top:231px;width:323px;height:574px;background:#ffffff;"></div><div style="position:absolute;left:1132px;top:231px;width:323px;height:23px;background:#eef0f3;"></div><div style="position:absolute;left:1137px;top:236px;white-space:pre;font-size:11.5px;line-height:14px;color:#3a3a3a;">17:12</div><div style="position:absolute;left:1343px;top:236px;white-space:pre;font-size:11.5px;line-height:14px;color:#3a3a3a;">7.2K/s</div><svg style="position:absolute;left:1376px;top:235px" width="80" height="14">
<g stroke="#444" stroke-width="1.1" fill="none"><path d="M3 10 V6 Q3 3 6.5 3 Q10 3 10 6 V10 H2 M11 2 L2 11"/><path d="M5.5 11.5 H7.5"/></g>
<g fill="#444"><rect x="19" y="9" width="1.5" height="3"/><rect x="21.5" y="7" width="1.5" height="5"/><rect x="24" y="5" width="1.5" height="7"/><rect x="26.5" y="3" width="1.5" height="9"/></g>
<path d="M35 5.5 Q41 0 47 5.5 M37 8 Q41 4.5 45 8 M39.3 10.3 Q41 9 42.7 10.3" stroke="#444" stroke-width="1.3" fill="none"/>
<rect x="52.5" y="2.5" width="20" height="9" rx="4.5" fill="#62cd36" stroke="#333" stroke-width="1"/>
<text x="62.5" y="10.5" font-family="Liberation Sans" font-size="8" font-weight="bold" fill="#1a3a10" text-anchor="middle">83</text>
</svg><div style="position:absolute;left:1139px;top:263px;width:310px;height:27px;background:#ededed;border-radius:6px;"></div><svg style="position:absolute;left:1156px;top:269px" width="17" height="16"><path d="M16 8 H2 M8 1.5 L1.5 8 L8 14.5" stroke="#555" stroke-width="1.8" fill="none"/></svg><div style="position:absolute;left:1190px;top:267px;white-space:pre;font-size:14px;line-height:18px;color:#7c7c7c;-webkit-text-stroke-width:0.2px;">古剑奇谭三</div><svg style="position:absolute;left:1424px;top:271px" width="12" height="12"><path d="M1 1 L11 11 M11 1 L1 11" stroke="#555" stroke-width="1.6"/></svg><div style="position:absolute;left:1146px;top:371px;width:296px;height:1px;background:#e6e6e6;"></div><div style="position:absolute;left:1146px;top:407px;width:296px;height:1px;background:#e6e6e6;"></div><div style="position:absolute;left:1146px;top:443px;width:296px;height:1px;background:#e6e6e6;"></div><div style="position:absolute;left:1146px;top:351px;width:20px;height:14px;background:linear-gradient(160deg,#2f4250,#7c94a0 60%,#c8d0c8);border-radius:2px;"></div><div style="position:absolute;left:1175px;top:346px;white-space:pre;font-size:12px;letter-spacing:0.6px;line-height:16px;-webkit-text-stroke-width:0.25px;color:#333">古剑奇谭<span style="display:inline-block;width:7px;text-align:right">(</span>电视剧<span style="display:inline-block;width:7px;text-align:left">)</span></div><div style="position:absolute;left:1388px;top:346px;white-space:pre;font-size:11px;line-height:16px;color:#b0b0b0;">83 讨论</div><svg style="position:absolute;left:1428px;top:348px" width="8" height="13"><path d="M1 1 L6.5 6.5 L1 12" stroke="#c8c8c8" stroke-width="1.2" fill="none"/></svg><div style="position:absolute;left:1146px;top:379px;width:22px;height:22px;background:#1e2b45;border-radius:2px;"></div><svg style="position:absolute;left:1146px;top:379px" width="22" height="22"><path d="M13 3 L17 6 L14 10 L18 13 L15 18" stroke="#dfe3ea" stroke-width="1.6" fill="none"/><path d="M4 6 V17" stroke="#8a93a6" stroke-width="1.2"/></svg><div style="position:absolute;left:1175px;top:382px;white-space:pre;font-size:12px;letter-spacing:0.6px;line-height:16px;-webkit-text-stroke-width:0.25px;color:#333">古剑奇谭三<span style="display:inline-block;width:8px;text-align:center">:</span>梦付千秋星垂野<span style="display:inline-block;width:8px;text-align:right">(</span>游<span style="font-size:11px">...</span></div><div style="position:absolute;left:1374px;top:382px;white-space:pre;font-size:11px;line-height:16px;color:#b0b0b0;">126 讨论</div><svg style="position:absolute;left:1428px;top:384px" width="8" height="13"><path d="M1 1 L6.5 6.5 L1 12" stroke="#c8c8c8" stroke-width="1.2" fill="none"/></svg><svg style="position:absolute;left:1149px;top:419px" width="15" height="14"><circle cx="6" cy="6" r="4.8" stroke="#aaa" stroke-width="1.3" fill="none"/><path d="M9.5 9.5 L13 13" stroke="#aaa" stroke-width="1.5"/></svg><div style="position:absolute;left:1175px;top:418px;white-space:pre;font-size:12px;letter-spacing:0.6px;line-height:16px;-webkit-text-stroke-width:0.25px;color:#a8a8a8">古剑奇谭三<span style="color:#333">试玩</span></div><svg style="position:absolute;left:1424px;top:420px" width="12" height="12"><path d="M1.5 10.5 V1.5 H10.5 M1.5 1.5 L11 11" stroke="#bbb" stroke-width="1.3" fill="none"/></svg><div style="position:absolute;left:1209px;top:454px;white-space:pre;font-size:12px;letter-spacing:0.6px;line-height:16px;-webkit-text-stroke-width:0.25px;color:#3f8fe6">查看<span style="display:inline-block;width:9px;text-align:center">|</span>古剑奇谭三<span style="display:inline-block;width:8px;text-align:center">|</span>的搜索结果</div><div style="position:absolute;left:1130px;top:299px;width:327px;height:37px;box-sizing:border-box;border:1px solid #a5ea6a;background:#c3dcc9;"></div><svg style="position:absolute;left:1148px;top:313px" width="18" height="9"><path d="M1 5 L4 3 L6 6 L9 2 L11 6 L14 3 L17 5" stroke="#8b9a6a" stroke-width="1.2" fill="none"/></svg><div style="position:absolute;left:1175px;top:310px;white-space:pre;font-size:12px;letter-spacing:0.6px;line-height:16px;-webkit-text-stroke-width:0.25px;color:#66736b">古剑奇谭<span style="display:inline-block;width:10px;text-align:right">(</span>游戏<span style="display:inline-block;width:6px;text-align:left">)</span></div><div style="position:absolute;left:1291px;top:315px;width:5px;height:5px;background:#ff0090;"></div><div style="position:absolute;left:1374px;top:310px;white-space:pre;font-size:11px;line-height:16px;color:#a3b6aa;">331 讨论</div><svg style="position:absolute;left:1428px;top:312px" width="8" height="13"><path d="M1 1 L6.5 6.5 L1 12" stroke="#a9bdb0" stroke-width="1.2" fill="none"/></svg><div style="position:absolute;left:1130px;top:336px;width:273px;height:21px;background:#161616;"></div><div style="position:absolute;left:1154px;top:336px;white-space:pre;font-size:14px;line-height:18px;color:#ff1a1a;-webkit-text-stroke:0.45px #ff1a1a;letter-spacing:-0.3px;">Other</div><div style="position:absolute;left:1199px;top:336px;white-space:pre;font-size:14px;line-height:18px;color:#ffffff;-webkit-text-stroke:0.3px #ffffff;">android.widget.LinearLayout</div><div style="position:absolute;left:1132px;top:805px;width:323px;height:35px;background:#3a3a3a;"></div><div style="position:absolute;left:1130px;top:840px;width:327px;height:2px;background:#454545;"></div><svg style="position:absolute;left:1132px;top:805px" width="323" height="35">
<g stroke="#e8e8e8" stroke-width="1.6" fill="none">
<path d="M32 12 H48 M32 17 H48 M32 22 H48"/>
<path d="M113.5 17 L122.5 9 L131.5 17 M116 15 V25 H129 V15 M120 25 V18 H125 V25"/>
<path d="M206 10 L198.8 17.4 L206 24.8" stroke-width="1.4"/>
<path d="M280.2 11.1 A7.2 7.2 0 1 0 286.2 11.1" stroke-width="1.4"/><path d="M283.2 8.9 V18" stroke-width="1.4"/>
</g></svg><div style="position:absolute;left:-4px;top:673px;width:80px;height:28px;background:linear-gradient(#ececec,#dedede);border-radius:5px;box-shadow:0 0 1px #111;"></div><svg style="position:absolute;left:0;top:673px" width="76" height="28">
<rect x="0" y="7" width="1.2" height="3.5" fill="#3a3d42"/>
<circle cx="4" cy="16" r="1.9" fill="#3a3d42"/>
<path d="M5.6 16.2 Q5.6 19.5 2.5 20.8" stroke="#3a3d42" stroke-width="1.5" fill="none"/>
<path d="M33.5 8.1 A6.5 6.5 0 1 1 25.1 16.3 A7.6 7.6 0 0 0 33.5 8.1 Z" fill="#3a3d42"/>
<g stroke="#3a3d42" stroke-width="2"><path d="M61 7 V21 M54 14 H68 M56 9 L66 19 M66 9 L56 19"/></g>
<circle cx="61" cy="14" r="4.2" fill="#e4e4e4" stroke="#3a3d42" stroke-width="2"/>
</svg><div style="position:absolute;left:1460px;top:980px;width:1px;height:15px;background:#3e3e3e;"></div><div style="position:absolute;left:0px;top:993.5px;width:1461px;height:1.5px;background:#3a3a3a;"></div><svg style="position:absolute;left:1446px;top:980px" width="15" height="15"><g fill="#d8d8d8"><rect x="10" y="2.5" width="2.6" height="2.6"/><rect x="6.2" y="6.3" width="2.6" height="2.6"/><rect x="10" y="6.3" width="2.6" height="2.6"/><rect x="2.5" y="10.1" width="2.6" height="2.6"/><rect x="6.2" y="10.1" width="2.6" height="2.6"/><rect x="10" y="10.1" width="2.6" height="2.6"/></g></svg></div></body></html>
